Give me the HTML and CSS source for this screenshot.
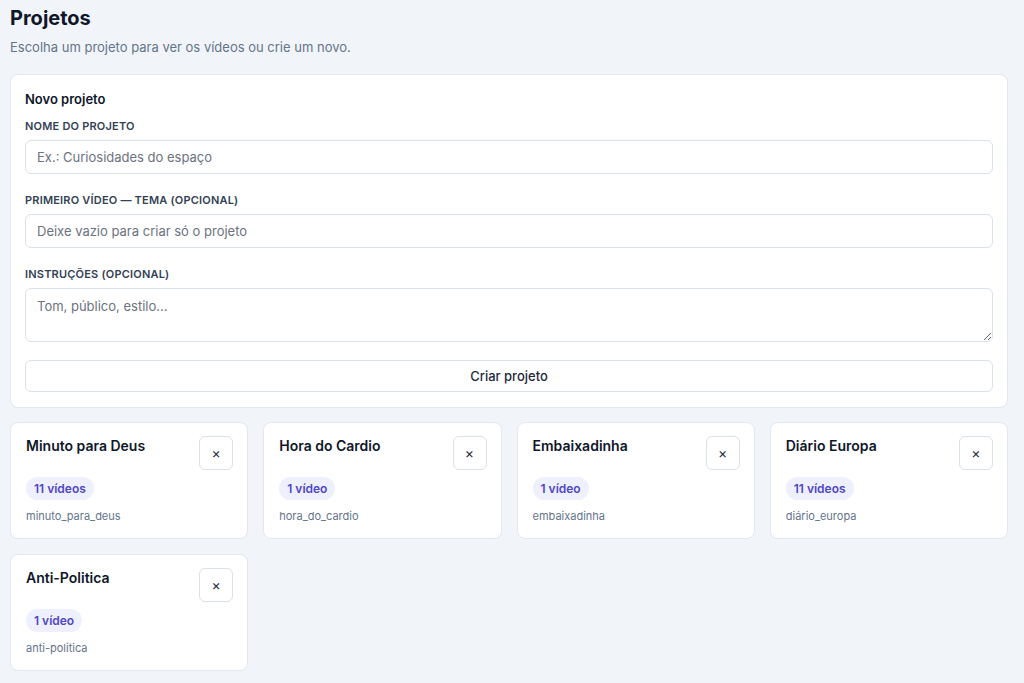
FILE: index.html
```html
<!DOCTYPE html>
<html lang="pt-BR">
<head>
    <meta charset="UTF-8">
    <meta name="viewport" content="width=device-width, initial-scale=1.0">
    <title>Projetos</title>
    <link rel="stylesheet" href="styles.css">
</head>
<body>
    <div class="page">
        <h1>Projetos</h1>
        <p class="subtitle">Escolha um projeto para ver os vídeos ou crie um novo.</p>

        <div class="panel">
            <h2>Novo projeto</h2>
            <form id="newProject">
                <div class="field">
                    <label for="name">Nome do projeto</label>
                    <input type="text" id="name" placeholder="Ex.: Curiosidades do espaço">
                </div>
                <div class="field">
                    <label for="topic">Primeiro vídeo — tema (opcional)</label>
                    <input type="text" id="topic" placeholder="Deixe vazio para criar só o projeto">
                </div>
                <div class="field">
                    <label for="notes">Instruções (opcional)</label>
                    <textarea id="notes" placeholder="Tom, público, estilo..."></textarea>
                </div>
                <button type="submit" class="btn-create">Criar projeto</button>
            </form>
        </div>

        <div class="project-grid">
            <div class="project-card">
                <div class="card-head">
                    <h3>Minuto para Deus</h3>
                    <button class="btn-remove">×</button>
                </div>
                <span class="badge">11 vídeos</span>
                <div class="slug">minuto_para_deus</div>
            </div>
            <div class="project-card">
                <div class="card-head">
                    <h3>Hora do Cardio</h3>
                    <button class="btn-remove">×</button>
                </div>
                <span class="badge">1 vídeo</span>
                <div class="slug">hora_do_cardio</div>
            </div>
            <div class="project-card">
                <div class="card-head">
                    <h3>Embaixadinha</h3>
                    <button class="btn-remove">×</button>
                </div>
                <span class="badge">1 vídeo</span>
                <div class="slug">embaixadinha</div>
            </div>
            <div class="project-card">
                <div class="card-head">
                    <h3>Diário Europa</h3>
                    <button class="btn-remove">×</button>
                </div>
                <span class="badge">11 vídeos</span>
                <div class="slug">diário_europa</div>
            </div>
            <div class="project-card">
                <div class="card-head">
                    <h3>Anti-Politica</h3>
                    <button class="btn-remove">×</button>
                </div>
                <span class="badge">1 vídeo</span>
                <div class="slug">anti-politica</div>
            </div>
        </div>
    </div>
</body>
</html>
```

FILE: styles.css
```css
* {
    box-sizing: border-box;
}
body {
    font-family: Inter, "Noto Sans", sans-serif;
    margin: 0;
    background-color: #f1f4f9;
    color: #0f172a;
}
.page {
    max-width: 998px;
    padding: 6px 10px 14px;
    box-sizing: content-box;
}
h1 {
    margin: 0;
    font-size: 20px;
    line-height: 24px;
    font-weight: 700;
}
.subtitle {
    margin: 9px 0 0;
    font-size: 13px;
    line-height: 16px;
    color: #64748b;
}
.panel {
    margin-top: 19px;
    background: white;
    border: 1px solid #e2e8f0;
    border-radius: 8px;
    padding: 14px 14px 15px;
}
h2 {
    margin: 2px 0 0;
    font-size: 13px;
    line-height: 16px;
    font-weight: 600;
}
form {
    display: flex;
    flex-direction: column;
    margin-top: 12px;
}
.field {
    display: flex;
    flex-direction: column;
    margin-bottom: 19px;
}
label {
    font-size: 11px;
    line-height: 14px;
    font-weight: 600;
    text-transform: uppercase;
    letter-spacing: 0.2px;
    color: #334155;
    margin-bottom: 7px;
}
input, textarea, button {
    font-family: inherit;
    font-size: 13px;
    border: 1px solid #dbe1e8;
    border-radius: 6px;
    background: white;
    color: #0f172a;
}
input {
    height: 34px;
    padding: 0 11px;
}
textarea {
    height: 54px;
    padding: 9px 11px;
    resize: vertical;
}
input::placeholder, textarea::placeholder {
    color: #6b7280;
}
.field:nth-child(3) {
    margin-bottom: 18px;
}
.btn-create {
    height: 32px;
    font-weight: 500;
    color: #1e293b;
    cursor: pointer;
}
.project-grid {
    display: grid;
    grid-template-columns: repeat(4, 1fr);
    gap: 15px;
    margin-top: 14px;
}
.project-card {
    background: white;
    border: 1px solid #e2e8f0;
    border-radius: 8px;
    padding: 13px 14px 15px;
    display: flex;
    flex-direction: column;
    align-items: flex-start;
}
.card-head {
    display: flex;
    justify-content: space-between;
    align-items: flex-start;
    width: 100%;
}
h3 {
    margin: 1px 0 0 1px;
    font-size: 14px;
    line-height: 18px;
    font-weight: 600;
}
.btn-remove {
    width: 34px;
    height: 34px;
    padding: 0;
    font-size: 14px;
    line-height: 1;
    color: #1e293b;
    cursor: pointer;
}
.badge {
    margin-top: 7px;
    margin-left: 1px;
    height: 23px;
    line-height: 23px;
    padding: 0 8px;
    border-radius: 12px;
    background: #eef0fd;
    color: #4f46c8;
    font-size: 12px;
    font-weight: 600;
}
.slug {
    margin-top: 9px;
    margin-left: 1px;
    font-size: 11px;
    line-height: 14px;
    color: #64748b;
}
```
